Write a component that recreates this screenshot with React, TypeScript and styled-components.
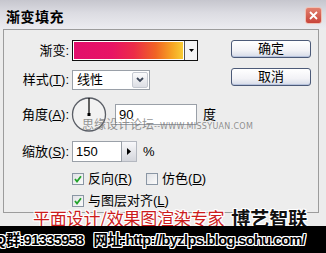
import React from 'react'
import styled, { createGlobalStyle } from 'styled-components'

const GlobalStyle = createGlobalStyle`
  html, body {
    margin: 0;
    padding: 0;
    background: #ececec;
  }
`

const cjk = `'Noto Sans CJK SC', 'Liberation Sans', sans-serif`
const latin = `'Liberation Sans', 'Noto Sans CJK SC', sans-serif`

const Page = styled.div`
  position: relative;
  width: 326px;
  height: 253px;
  overflow: hidden;
  background: #ececec;
  font-family: ${latin};
  color: #000;
`

const Window = styled.div`
  display: flex;
  flex-direction: column;
  height: 213px;
`

const TitleBar = styled.div`
  display: flex;
  align-items: center;
  justify-content: space-between;
  height: 29px;
  padding: 0 4px 0 6px;
  box-sizing: border-box;
  background: linear-gradient(#c6c6ce 0%, #dcdce2 45%, #ececf0 100%);
`

const Title = styled.div`
  font-family: ${cjk};
  font-size: 14px;
  font-weight: 700;
  letter-spacing: 0.5px;
  line-height: 16px;
  margin-top: 2px;
`

const CloseButton = styled.div`
  width: 17px;
  height: 17px;
  margin-top: 1px;
  border-radius: 3px;
  border: 1px solid #f0c0b4;
  box-sizing: border-box;
  background: linear-gradient(#e2806e, #c8443a);
  display: flex;
  align-items: center;
  justify-content: center;
`

const Body = styled.div`
  flex: 1;
  display: flex;
  margin: 0 7px 0 3px;
  padding-top: 10px;
  border: 1px solid #9c9c9c;
  background: #ededed;
`

const Form = styled.div`
  width: 227px;
  display: grid;
  grid-template-columns: 65px auto;
  column-gap: 3px;
  align-content: start;
  align-items: center;
`

const Label = styled.div<{ $top?: number }>`
  grid-column: 1;
  margin-top: ${({ $top }) => $top ?? 0}px;
  text-align: right;
  font-size: 13px;
  line-height: 16px;
  white-space: nowrap;
`

const Field = styled.div<{ $top?: number }>`
  grid-column: 2;
  margin-top: ${({ $top }) => $top ?? 0}px;
  display: flex;
  align-items: center;
`

const GradientBox = styled.div`
  display: flex;
  width: 126px;
  height: 21px;
  box-sizing: border-box;
  border: 1px solid #111;
  background: #fff;
`

const Swatch = styled.div`
  flex: 1;
  margin: 1px;
  background: linear-gradient(90deg, #e20e6c 0%, #e81464 35%, #ec2c48 55%, #f06424 75%, #f6a424 90%, #f8cc34 100%);
`

const SwatchArrow = styled.div`
  width: 12px;
  border-left: 1px solid #555;
  display: flex;
  align-items: center;
  justify-content: center;
  background: #f4f4f4;
`

const Select = styled.div`
  display: flex;
  width: 78px;
  height: 20px;
  box-sizing: border-box;
  border: 1px solid #9aa0a8;
  background: #fff;
`

const SelectText = styled.div`
  flex: 1;
  padding-left: 4px;
  font-size: 13px;
  line-height: 18px;
`

const SelectButton = styled.div`
  width: 16px;
  margin: 1px;
  border-radius: 2px;
  border: 1px solid #c4c8d0;
  box-sizing: border-box;
  background: linear-gradient(#fbfbfc, #dcdee4);
  display: flex;
  align-items: center;
  justify-content: center;
`

const Input = styled.div<{ $width: number }>`
  width: ${({ $width }) => $width}px;
  height: 21px;
  box-sizing: border-box;
  border: 1px solid #9aa0a8;
  background: #fff;
  padding-left: 3px;
  font-size: 13px;
  line-height: 19px;
`

const Unit = styled.span<{ $gap: number }>`
  margin-left: ${({ $gap }) => $gap}px;
  font-size: 13px;
  line-height: 16px;
`

const StepButton = styled.div`
  width: 15px;
  height: 21px;
  box-sizing: border-box;
  border: 1px solid #b4b8c0;
  border-left: none;
  background: linear-gradient(#f8f8fa, #d4d6dc);
  display: flex;
  align-items: center;
  justify-content: center;
`

const Dial = styled.svg`
  display: block;
  margin-left: -1px;
`

const Check = styled.label<{ $gap?: number }>`
  display: flex;
  align-items: center;
  gap: 4px;
  margin-right: ${({ $gap }) => $gap ?? 0}px;
  font-size: 13px;
  line-height: 14px;
`

const Box = styled.span`
  width: 12px;
  height: 12px;
  box-sizing: border-box;
  border: 1px solid #8a96a4;
  background: linear-gradient(135deg, #e0e2e6, #fbfbfb);
  display: flex;
  align-items: center;
  justify-content: center;
`

const Buttons = styled.div`
  display: flex;
  flex-direction: column;
  gap: 10px;
`

const Button = styled.div`
  width: 80px;
  height: 18px;
  box-sizing: border-box;
  border: 1px solid #4c5a78;
  border-radius: 3px;
  background: linear-gradient(#ffffff 0%, #f2f2f6 60%, #d6dbe8 100%);
  box-shadow: inset 0 -1px 0 #b6c2dc;
  text-align: center;
  font-size: 13px;
  line-height: 16px;
`

const Watermark = styled.div`
  position: absolute;
  left: 82px;
  top: 117px;
  display: flex;
  align-items: baseline;
  color: rgba(110, 110, 110, 0.75);
  white-space: nowrap;
`

const WatermarkCn = styled.span`
  font-family: ${cjk};
  font-size: 12px;
  line-height: 14px;
`

const WatermarkEn = styled.span`
  font-family: 'DejaVu Sans', sans-serif;
  font-size: 8px;
  letter-spacing: 0.3px;
`

const Banner = styled.div`
  position: absolute;
  left: 33px;
  top: 209px;
  display: flex;
  align-items: center;
  gap: 7px;
  white-space: nowrap;
  font-family: ${cjk};
`

const outline = (c: string) =>
  `1px 0 0 ${c}, -1px 0 0 ${c}, 0 1px 0 ${c}, 0 -1px 0 ${c}, 1px 1px 0 ${c}, -1px -1px 0 ${c}, 1px -1px 0 ${c}, -1px 1px 0 ${c}`

const BannerRed = styled.span`
  color: #cc1c1c;
  font-size: 17px;
  line-height: 17px;
  letter-spacing: -0.2px;
  text-shadow: ${outline('#fff')};
`

const BannerBrand = styled.span`
  color: #111;
  font-size: 19px;
  font-weight: 700;
  line-height: 17px;
  text-shadow: ${outline('#fff')};
`

const Footer = styled.div`
  position: absolute;
  left: 0;
  right: 0;
  bottom: 0;
  height: 27px;
  background: #000;
  display: flex;
  align-items: center;
  gap: 10px;
  white-space: nowrap;
`

const FooterText = styled.span<{ $shift?: number }>`
  margin-left: ${({ $shift }) => $shift ?? 0}px;
  color: #000;
  font-size: 14.5px;
  font-weight: 700;
  letter-spacing: -0.6px;
  line-height: 18px;
  text-shadow: ${outline('#fff')};
`

function CheckMark() {
  return (
    <svg width="8" height="8" viewBox="0 0 8 8">
      <path d="M1 4 L3 6.5 L7 1.2" fill="none" stroke="#22a32a" strokeWidth="1.8" />
    </svg>
  )
}

function CheckItem({ checked, gap, children }: { checked?: boolean; gap?: number; children: React.ReactNode }) {
  return (
    <Check $gap={gap}>
      <Box>{checked && <CheckMark />}</Box>
      <span>{children}</span>
    </Check>
  )
}

export default function App() {
  return (
    <Page>
      <GlobalStyle />
      <Window>
        <TitleBar>
          <Title>渐变填充</Title>
          <CloseButton>
            <svg width="9" height="9" viewBox="0 0 9 9">
              <path d="M1 1 L8 8 M8 1 L1 8" stroke="#fff" strokeWidth="1.8" />
            </svg>
          </CloseButton>
        </TitleBar>
        <Body>
          <Form>
            <Label>渐变:</Label>
            <Field>
              <GradientBox>
                <Swatch />
                <SwatchArrow>
                  <svg width="5" height="3" viewBox="0 0 5 3">
                    <path d="M0 0 H5 L2.5 3 Z" fill="#000" />
                  </svg>
                </SwatchArrow>
              </GradientBox>
            </Field>

            <Label $top={9}>
              样式(<u>T</u>):
            </Label>
            <Field $top={9}>
              <Select>
                <SelectText>线性</SelectText>
                <SelectButton>
                  <svg width="8" height="6" viewBox="0 0 8 6">
                    <path d="M1 1 L4 4 L7 1" fill="none" stroke="#3c4658" strokeWidth="1.8" />
                  </svg>
                </SelectButton>
              </Select>
            </Field>

            <Label $top={7}>
              角度(<u>A</u>):
            </Label>
            <Field $top={7}>
              <Dial width="36" height="35" viewBox="0 0 36 35">
                <circle cx="18" cy="17.5" r="16.5" fill="#f2f2f2" stroke="#5a5e66" strokeWidth="1.3" />
                <line x1="18" y1="17.5" x2="18" y2="1" stroke="#000" strokeWidth="1.2" />
                <rect x="16.5" y="16" width="3" height="3" fill="#000" />
              </Dial>
              <Unit $gap={8}>
                <Input $width={82}>90</Input>
              </Unit>
              <Unit $gap={6}>度</Unit>
            </Field>

            <Label $top={9}>
              缩放(<u>S</u>):
            </Label>
            <Field $top={9}>
              <Input $width={50}>150</Input>
              <StepButton>
                <svg width="4" height="7" viewBox="0 0 4 7">
                  <path d="M0 0 L4 3.5 L0 7 Z" fill="#000" />
                </svg>
              </StepButton>
              <Unit $gap={6}>%</Unit>
            </Field>

            <Field $top={10}>
              <CheckItem checked gap={14}>
                反向(<u>R</u>)
              </CheckItem>
              <CheckItem>
                仿色(<u>D</u>)
              </CheckItem>
            </Field>
            <Field $top={8}>
              <CheckItem checked>
                与图层对齐(<u>L</u>)
              </CheckItem>
            </Field>
          </Form>
          <Buttons>
            <Button>确定</Button>
            <Button>取消</Button>
          </Buttons>
        </Body>
      </Window>

      <Watermark>
        <WatermarkCn>思缘设计论坛</WatermarkCn>
        <WatermarkEn>--WWW.MISSYUAN.COM</WatermarkEn>
      </Watermark>

      <Banner>
        <BannerRed>平面设计/效果图渲染专家</BannerRed>
        <BannerBrand>博艺智联</BannerBrand>
      </Banner>

      <Footer>
        <FooterText $shift={-5}>Q群:91335958</FooterText>
        <FooterText>网址:http://byzlps.blog.sohu.com/</FooterText>
      </Footer>
    </Page>
  )
}
